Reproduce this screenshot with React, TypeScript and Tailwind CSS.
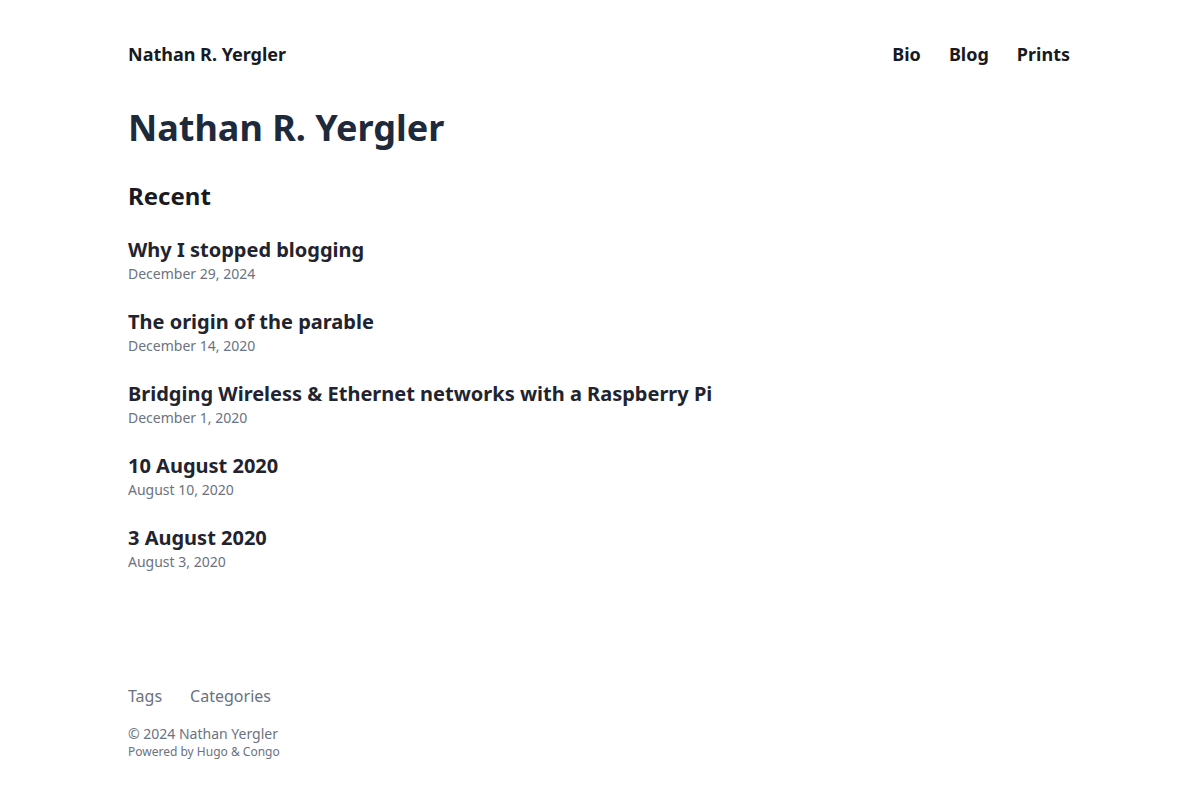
import React from "react";

const posts = [
  { title: "Why I stopped blogging", date: "December 29, 2024" },
  { title: "The origin of the parable", date: "December 14, 2020" },
  { title: "Bridging Wireless & Ethernet networks with a Raspberry Pi", date: "December 1, 2020" },
  { title: "10 August 2020", date: "August 10, 2020" },
  { title: "3 August 2020", date: "August 3, 2020" },
];

export default function App() {
  return (
    <div
      className="flex flex-col h-screen px-32 m-auto max-w-7xl text-lg leading-7 text-[#1a1c24] bg-white"
      style={{ fontFamily: '"Noto Sans", "Open Sans", sans-serif' }}
    >
      <header className="py-10 font-bold text-[#181a22] flex flex-row items-center justify-between">
        <a className="text-lg leading-7 font-bold">Nathan R. Yergler</a>
        <nav className="flex flex-row text-lg leading-7 pr-0.5">
          <a className="ml-7">Bio</a>
          <a className="ml-7">Blog</a>
          <a className="ml-7">Prints</a>
        </nav>
      </header>
      <main className="grow">
        <h1 className="text-4xl leading-10 font-bold text-[#1e293b]">Nathan R. Yergler</h1>
        <section>
          <h2 className="mt-8 text-2xl leading-8 font-bold text-[#181a22]">Recent</h2>
          {posts.map((p) => (
            <article key={p.title} className="mt-6">
              <h3 className="text-xl leading-7 font-bold text-[#1f2430]">{p.title}</h3>
              <div className="text-sm leading-5 text-[#6b7280]">{p.date}</div>
            </article>
          ))}
        </section>
      </main>
      <footer className="py-10">
        <nav className="pb-4 text-base leading-6 text-[#6b7280]">
          <ul className="flex flex-row">
            <li className="mr-7">Tags</li>
            <li>Categories</li>
          </ul>
        </nav>
        <p className="text-sm leading-5 text-[#6b7280]">© 2024 Nathan Yergler</p>
        <p className="text-xs leading-4 text-[#6b7280]">Powered by Hugo &amp; Congo</p>
      </footer>
    </div>
  );
}
